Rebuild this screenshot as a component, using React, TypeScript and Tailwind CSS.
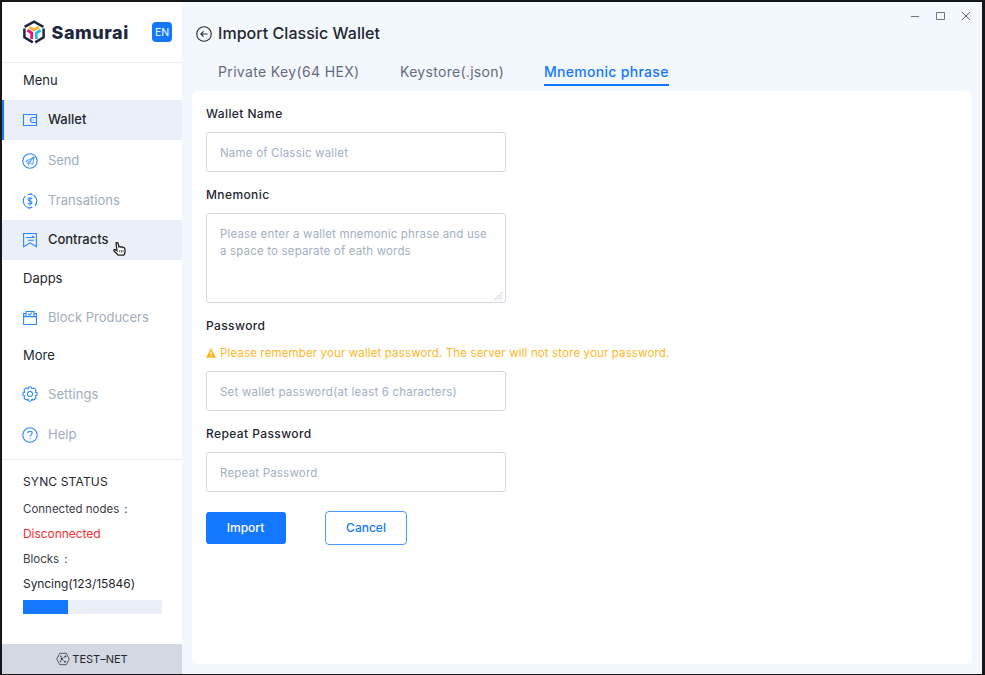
import type { ReactNode } from "react";

function Icon({ children }: { children: ReactNode }) {
  return (
    <svg width="16" height="16" viewBox="0 0 16 16" fill="none" stroke="#2b87fb" strokeWidth="1.1" className="shrink-0 overflow-visible">
      {children}
    </svg>
  );
}

const WalletIcon = () => (
  <Icon>
    <path d="M1.5 2.5h13v11h-13zM14.5 5.500h-3.500c-1.600 0-2.400.9-2.400 2.500s.8 2.500 2.400 2.500h3.500" />
    <path d="M11.400 7.500v1" strokeWidth=".8" />
  </Icon>
);

const SendIcon = () => (
  <Icon>
    <circle cx="8" cy="8" r="7.2" />
    <path d="M12.2 4 3.8 8.2l2.3 1.1L12.2 4 7.2 9.6l3.4 1.6L12.2 4zM6.1 9.3v2.9l1.5-2.3" strokeWidth="0.8" />
  </Icon>
);

const TransactionsIcon = () => (
  <Icon>
    <path d="M4.800 14A6.800 6.800 0 0 1 3.200 3.200M5.600 1.700a6.800 6.800 0 0 1 4.200-.3L8.600.2M11.600 2.200a6.800 6.800 0 0 1 1.200 10.600M10.400 14.300a6.800 6.800 0 0 1-4.200.3l1.200 1.200" />
    <path d="M10 6.100C9.700 5.300 9 5 8 5c-1.200 0-2 .6-2 1.500C6 8.500 10 7.500 10 9.600c0 .9-.8 1.500-2 1.500-1.100 0-1.900-.4-2.100-1.300M8 4v8.200" />
  </Icon>
);

const ContractsIcon = () => (
  <Icon>
    <path d="M1.600 1.500h12.800v13.300L8 10.800l-6.400 4z" />
    <path d="M4 5.500h7.800L10.200 4M6 8.200h5.800" />
  </Icon>
);

const ProducersIcon = () => (
  <Icon>
    <path d="M4 3.600H1.600v10.900h12.800V3.600H12M1.600 6.600h12.800M4 6.600V1.500h8v5.100M6.100 3.800l1.500 1.300 2.600-2.400" />
  </Icon>
);

const SettingsIcon = () => (
  <Icon>
    <path
      strokeLinejoin="round"
      d="M6.700 1.100Q8 .3 9.300 1.100L9.800 2.700 11.500 2Q13.300 2.700 14 4.500L13.300 6.200 14.900 6.700Q15.700 8 14.900 9.300L13.300 9.800 14 11.500Q13.300 13.300 11.500 14L9.800 13.300 9.300 14.900Q8 15.700 6.700 14.900L6.200 13.300 4.500 14Q2.700 13.300 2 11.500L2.700 9.800 1.100 9.300Q.3 8 1.100 6.700L2.700 6.200 2 4.500Q2.700 2.700 4.500 2L6.200 2.700z"
    />
    <circle cx="8" cy="8" r="2.500" />
  </Icon>
);

const HelpIcon = () => (
  <Icon>
    <circle cx="8" cy="8" r="7.200" />
    <path d="M5.800 6.300C5.800 5 6.700 4.200 8 4.200s2.200.8 2.200 1.900c0 1.600-2.200 1.600-2.200 3.500" />
    <circle cx="8" cy="11.600" r=".7" fill="#2b87fb" stroke="none" />
  </Icon>
);

function Logo() {
  return (
    <svg width="22" height="25" viewBox="0 0 22 25" fill="none" className="shrink-0">
      <path d="M1.600 6.800 11 1.700 20.400 6.800" stroke="#1e2740" strokeWidth="2.500" />
      <path d="M1.400 8.600v8.800L9.800 22.400M20.600 8.600v8.800L12.200 22.400" stroke="#1e2740" strokeWidth="2.500" />
      <path d="M6 7.300 11 9.700 16 7.300" stroke="#fcb62e" strokeWidth="2.800" />
      <path d="M4.400 10.300 8.700 13V19" stroke="#ee1477" strokeWidth="2.900" />
      <path d="M17.600 10.300 13.300 13V19" stroke="#20c1e0" strokeWidth="2.900" />
    </svg>
  );
}

function HandCursor() {
  return (
    <svg width="13" height="15" viewBox="0 0 13 15" className="absolute left-[109px] top-[22px]">
      <path
        d="M3 1.300c0-1 1.700-1 2 0l1 3.600c.7-.5 1.500-.3 1.800.2.700-.4 1.500-.2 1.800.4 1-.3 2 .2 2.200 1.200l.3 2.600c.1 1.600-.5 2.800-1.500 3.900H5.200C4 11.700 2.500 10.400 1 9c-.7-1 .3-1.900 1.300-1.300l1.700 1z"
        fill="#fff"
        stroke="#222"
        strokeWidth="1.300"
      />
      <path d="M6.700 8v2.500M8.400 8v2.500M10.100 8v2.500" stroke="#444" strokeWidth=".8" />
    </svg>
  );
}

type RowProps = { icon: ReactNode; label: string; spacing: string; active?: boolean; selected?: boolean; children?: ReactNode };

function MenuRow({ icon, label, spacing, active, selected, children }: RowProps) {
  return (
    <a
      className={`relative flex h-10 items-center gap-[10px] border-l-2 pl-[18px] text-[13px] ${spacing} ${
        active ? "bg-[#ebeff7] font-medium text-[#24272e]" : "text-[#a0adc0]"
      } ${selected ? "border-[#1378fe]" : "border-transparent"}`}
    >
      {icon}
      <span>{label}</span>
      {children}
    </a>
  );
}

function Sidebar() {
  return (
    <aside className="flex w-[180px] shrink-0 flex-col bg-white">
      <div className="flex h-[61px] shrink-0 items-center border-b border-[#e8eff7] pl-[21px]">
        <Logo />
        <span className="ml-[6.5px] w-[100.5px] text-[18px] font-extrabold tracking-[0.55px] text-[#1e2740]">Samurai</span>
        <span className="flex h-5 w-5 items-center justify-center rounded bg-[#1378fe] pt-px text-[10.5px] text-white">EN</span>
      </div>
      <nav className="h-[396px] shrink-0 text-[#24272e]">
        <h2 className="h-[37px] pl-[21px] text-[13px] leading-[34px]">Menu</h2>
        <MenuRow icon={<WalletIcon />} label="Wallet" spacing="tracking-[0px]" active selected />
        <MenuRow icon={<SendIcon />} label="Send" spacing="pt-0.5 tracking-[-0.1px]" />
        <MenuRow icon={<TransactionsIcon />} label="Transations" spacing="pt-0.5 tracking-[0.05px]" />
        <MenuRow icon={<ContractsIcon />} label="Contracts" spacing="tracking-[-0.05px]" active>
          <HandCursor />
        </MenuRow>
        <h2 className="h-[38px] pl-[21px] text-[13px] leading-[36px]">Dapps</h2>
        <MenuRow icon={<ProducersIcon />} label="Block Producers" spacing="tracking-[0px]" />
        <h2 className="h-9 pl-[21px] text-[13px] leading-[34px]">More</h2>
        <MenuRow icon={<SettingsIcon />} label="Settings" spacing="tracking-[0.1px] [&>span]:mt-px" />
        <MenuRow icon={<HelpIcon />} label="Help" spacing="pt-0.5 tracking-[0px]" />
      </nav>
      <section className="flex-1 border-t border-[#ebeef5] pl-[21px] pt-[9px] text-[12px] leading-[25px] text-[#24272e]">
        <h2 className="h-[27px] tracking-[0.15px]">SYNC STATUS</h2>
        <p className="flex h-[25px] gap-[5px] text-[11.5px] leading-[27px] text-[#3c4048]">
          <span>Connected nodes</span>
          <span>:</span>
        </p>
        <p className="h-[25px] tracking-[-0.05px] text-[#fb2c35]">Disconnected</p>
        <p className="flex h-[25px] gap-[5px] text-[11.5px] leading-[27px] text-[#3c4048]">
          <span>Blocks</span>
          <span>:</span>
        </p>
        <p className="h-[25px] tracking-[-0.07px]">Syncing(123/15846)</p>
        <div className="mt-[4px] h-[14px] w-[139px] bg-[#ebeff7]">
          <div className="h-full w-[45px] bg-[#1378fe]" />
        </div>
      </section>
      <footer className="flex h-[30px] shrink-0 items-center justify-center gap-[2px] bg-[#d4d8e1] text-[11px] text-[#24272e]">
        <svg width="14" height="14" viewBox="0 0 14 14" fill="none" stroke="#34373e" strokeWidth=".8">
          <path d="M3.800 1.300h6.400L13.300 7l-3.100 5.700H3.800L.7 7z" />
          <path d="M4.800 4.200 5.600 7 9.200 4.500M5.600 7 8.800 9.800M5.600 7 4.500 9.600" strokeWidth=".6" />
          <g fill="#34373e" stroke="none">
            <circle cx="4.800" cy="4.300" r=".7" />
            <circle cx="9.400" cy="4.400" r=".9" />
            <circle cx="5.700" cy="7" r="1" />
            <circle cx="9" cy="9.700" r=".9" />
            <circle cx="4.500" cy="9.600" r=".7" />
          </g>
        </svg>
        TEST–NET
      </footer>
    </aside>
  );
}

function Label({ children }: { children: ReactNode }) {
  return <label className="block h-[18px] text-[12px] font-medium leading-[18px] tracking-[0.4px] text-[#24272e]">{children}</label>;
}

function Field({ placeholder }: { placeholder: string }) {
  return (
    <input
      placeholder={placeholder}
      className="mt-[9px] block h-10 w-[300px] rounded-[3px] border border-[#d2d7e3] px-[13px] pt-px text-[11.5px] tracking-[0.2px] outline-none placeholder:text-[#a3b0c3]"
    />
  );
}

function ImportForm() {
  return (
    <main className="mx-[10px] h-[573px] rounded-[5px] bg-white px-[14px] pt-[14px]">
      <Label>Wallet Name</Label>
      <Field placeholder="Name of Classic wallet" />
      <div className="mt-[14px]">
        <Label>Mnemonic</Label>
      </div>
      <div className="relative mt-[9px] h-[90px] w-[300px]">
        <textarea
          placeholder="Please enter a wallet mnemonic phrase and use a space to separate of eath words"
          className="block h-full w-full resize-none rounded-[3px] border border-[#d2d7e3] py-[12px] pl-[13px] pr-[14px] text-[11.5px] leading-[17px] tracking-[0.17px] outline-none placeholder:text-[#a3b0c3]"
        />
        <svg width="9" height="9" viewBox="0 0 9 9" stroke="#c3c8d2" strokeWidth=".9" className="absolute bottom-[2px] right-[3px]">
          <path d="M0 8.500 8.500 0M3 8.500 8.500 3M6 8.500 8.500 6" />
        </svg>
      </div>
      <div className="mt-[14px]">
        <Label>Password</Label>
      </div>
      <p className="mt-[9px] flex h-[18px] items-center gap-[4px] text-[11.5px] tracking-[0.135px] text-[#fdb827]">
        <svg width="10" height="10" viewBox="0 0 10 10" className="shrink-0">
          <path d="M5 .2 9.900 9.800H.1z" fill="#fdb827" stroke="#fdb827" strokeWidth=".3" />
          <path d="M5 3.500v3M5 7.400v1.200" stroke="#fff" strokeWidth="1.200" />
        </svg>
        <span className="mt-px whitespace-nowrap">Please remember your wallet password. The server will not store your password.</span>
      </p>
      <Field placeholder="Set wallet password(at least 6 characters)" />
      <div className="mt-[14px]">
        <Label>Repeat Password</Label>
      </div>
      <Field placeholder="Repeat Password" />
      <div className="mt-[19px] flex items-center gap-[39px] text-[12px] font-medium">
        <button className="h-8 w-20 rounded-[3px] bg-[#1378fe] pr-px tracking-[0px] text-white">Import</button>
        <button className="h-[34px] w-[82px] rounded-[4px] border-[1.500px] border-[#4b99fd] tracking-[0px] text-[#1378fe]">Cancel</button>
      </div>
    </main>
  );
}

function WindowControls() {
  return (
    <svg width="61" height="12" viewBox="0 0 61 12" fill="none" stroke="#70747d" className="mt-[8px]">
      <path d="M0 6.500h8" />
      <path d="M25.500 2.500h8v7h-8z" />
      <path d="M51 2l8 8M59 2l-8 8" stroke="#5d6169" />
    </svg>
  );
}

export default function App() {
  return (
    <div className="flex h-[675px] w-[985px] overflow-hidden border-b border-l-2 border-r-[3px] border-t-2 border-[#14161a] bg-[#f3f7fe] font-['Inter','Liberation_Sans',sans-serif]">
      <Sidebar />
      <div className="min-w-0 flex-1">
        <header className="flex h-[56px] justify-between pl-[14px] pr-[10px]">
          <div className="flex items-center gap-[6px] pt-[7px]">
            <svg width="16" height="16" viewBox="0 0 16 16" fill="none" stroke="#292c33" strokeWidth="1.100">
              <circle cx="8" cy="8" r="7.300" />
              <path d="M11.500 8H5M7.500 5.300 4.800 8l2.700 2.700" />
            </svg>
            <h1 className="-mt-px text-[16px] font-medium tracking-[0.04px] text-[#24272e]">Import Classic Wallet</h1>
          </div>
          <WindowControls />
        </header>
        <div className="flex h-[33px] pl-9 text-[14px] leading-[28px] text-[#666c7b]">
          <span className="mr-[41px] h-7 w-[141px] whitespace-nowrap tracking-[0.35px]">Private Key(64 HEX)</span>
          <span className="mr-[40px] h-7 w-[104px] whitespace-nowrap tracking-[0.3px]">Keystore(.json)</span>
          <span className="h-7 w-[125px] whitespace-nowrap border-b-2 border-[#1378fe] font-medium tracking-[0.3px] text-[#1378fe]">Mnemonic phrase</span>
        </div>
        <ImportForm />
      </div>
    </div>
  );
}
